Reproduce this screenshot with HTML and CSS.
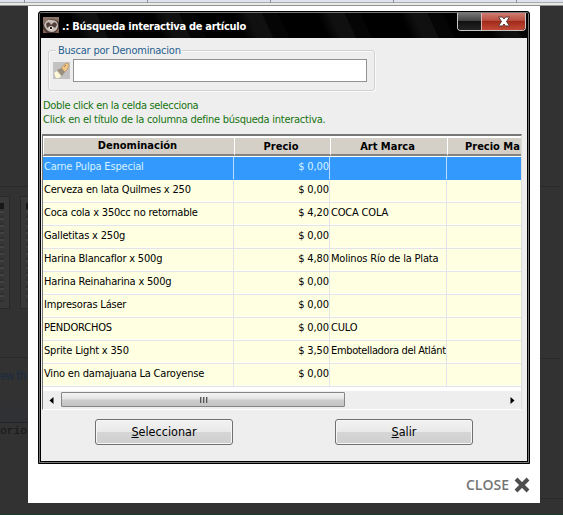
FILE: index.html
```html
<!DOCTYPE html>
<html lang="es">
<head>
<meta charset="utf-8">
<title>Búsqueda interactiva de artículo</title>
<link rel="stylesheet" href="styles.css">
</head>
<body>
<div class="strip"><i></i><i></i><i></i><i></i><i></i></div>
<div class="stage">
  <div class="behind">
    <div class="gap-top"></div>
    <div class="thumbs"><div class="thumb"><i></i></div><div class="thumb second"><i></i></div></div>
    <div class="gap-mid"></div>
    <div class="link">ew th</div>
    <div class="mono">orio</div>
  </div>
  <main class="lightbox">
    <section class="window">
      <header class="titlebar">
        <svg class="ferret" width="16" height="16" viewBox="0 0 16 16">
          <rect width="16" height="16" fill="#493a36"/>
          <path d="M0 0h16v5l-3-2-5-1-5 2-3 4z" fill="#8b7467"/>
          <path d="M1 8Q3 2 9 3q6 0 6 6-1 6-7 6-5-1-7-7z" fill="#c9bdb5"/>
          <path d="M3 7q2-3 4-1l1 2 2-2q3-2 4 2l-2 3-3-2H7l-3 2z" fill="#51403a"/>
          <path d="M6 10h4l-1 3H7z" fill="#f4eeea"/>
          <path d="M7 10h2v2H7z" fill="#251b19"/>
          <path d="M0 12l4 4H0zM16 11l-4 5h4z" fill="#81614f"/>
        </svg>
        <h1>.: Búsqueda interactiva de artículo</h1>
        <div class="controls">
          <span class="blank"></span>
          <span class="x"><svg width="14" height="11" viewBox="0 0 14 11"><path d="M1.500 1h4L7 3l1.500-2h4L9.500 5.500l3 4.500h-4L7 8l-1.500 2h-4l3-4.500z" fill="#fff" stroke="#5c3834"/></svg></span>
        </div>
      </header>
      <div class="body">
        <div class="search">
          <span class="legend">Buscar por Denominacion</span>
          <svg class="torch" width="17" height="17" viewBox="0 0 17 17">
            <rect width="17" height="17" fill="#c3c1c2"/>
            <path d="M8 6l4-4 3-1 1 3-2 4-4 3z" fill="#f2c888" stroke="#aa8553" stroke-width=".6"/>
            <path d="M4 8l5-2 3 4-3 4z" fill="#9c8e7d"/>
            <path d="M1 11l3-2 4 5-2 2H3z" fill="#fff8d5"/>
            <path d="M11 5l2-2" stroke="#8e704c"/>
          </svg>
          <input class="field" type="text" aria-label="Buscar">
        </div>
        <p class="hint"><span class="hint1">Doble click en la celda selecciona</span><br>Click en el título de la columna define búsqueda interactiva.</p>
        <div class="grid">
          <div class="row head"><b class="first">Denominación</b><b>Precio</b><b>Art Marca</b><b class="cut">Precio Ma</b></div>
          <div class="row selected"><span>Carne Pulpa Especial</span><span>$ 0,00</span><span></span><span></span></div>
          <div class="row"><span>Cerveza en lata Quilmes x 250</span><span>$ 0,00</span><span></span><span></span></div>
          <div class="row"><span>Coca cola x 350cc no retornable</span><span>$ 4,20</span><span>COCA COLA</span><span></span></div>
          <div class="row"><span>Galletitas x 250g</span><span>$ 0,00</span><span></span><span></span></div>
          <div class="row"><span>Harina Blancaflor x 500g</span><span>$ 4,80</span><span>Molinos Río de la Plata</span><span></span></div>
          <div class="row"><span>Harina Reinaharina x 500g</span><span>$ 0,00</span><span></span><span></span></div>
          <div class="row"><span>Impresoras Láser</span><span>$ 0,00</span><span></span><span></span></div>
          <div class="row"><span>PENDORCHOS</span><span>$ 0,00</span><span>CULO</span><span></span></div>
          <div class="row"><span>Sprite Light x 350</span><span>$ 3,50</span><span class="full">Embotelladora del Atlánt</span><span></span></div>
          <div class="row"><span>Vino en damajuana La Caroyense</span><span>$ 0,00</span><span></span><span></span></div>
          <div class="scroll">
            <svg width="18" height="17"><path d="M10.500 5v7L6.500 8.500z"/></svg>
            <div class="thumbbar"><i></i><i></i><i></i></div>
            <svg class="right" width="18" height="17"><path d="M7.500 5v7l4-3.500z"/></svg>
          </div>
        </div>
        <div class="actions">
          <button><u>S</u>eleccionar</button>
          <button><u>S</u>alir</button>
        </div>
      </div>
    </section>
    <footer class="close"><span>CLOSE</span><svg width="16" height="16" viewBox="0 0 16 16"><path d="M2 2l12 12M14 2L2 14" stroke="#4e4e4e" stroke-width="4"/></svg></footer>
  </main>
  <div class="behind after"><div class="a"></div><div class="b"></div><div class="c"></div></div>
</div>
<div class="bottom"></div>
</body>
</html>
```

FILE: styles.css
```css
* { box-sizing: border-box; }
body {
  margin: 0;
  width: 563px;
  height: 515px;
  overflow: hidden;
  background: #333;
  color: #000;
  font: 11px/14px "DejaVu Sans Condensed", "DejaVu Sans", sans-serif;
  letter-spacing: -.19px;
  white-space: nowrap;
}
.strip {
  display: flex;
  height: 6px;
  background: #dfe1ef;
  border-bottom: 1px solid #929292;
  box-shadow: inset 0 -2px #e9e9e6, inset 0 -3px #a9aaae;
}
.strip i { width: 123px; height: 3px; border-right: 1px solid #8f9098; }
.strip i:first-child { width: 25px; }
.stage { display: grid; grid-template-columns: 28px 512px 23px; height: 497px; }
.behind { overflow: hidden; background: #323232; }
.gap-top { height: 181px; border-bottom: 1px solid #292929; }
.thumbs { display: flex; height: 122px; padding-top: 9px; }
.thumb { width: 10px; height: 113px; padding: 6px 5px 6px 0; border: 1px solid #292929; border-left: 0; background: #383838; }
.thumb.second { width: 8px; margin-left: 10px; padding: 6px 0 6px 5px; border-left: 1px solid #292929; border-right: 0; }
.thumb i { display: block; height: 100%; background: repeating-linear-gradient(#303030 0 2px, #454141 2px 4px, #363636 4px 7px); border-top: 6px solid #171717; }
.gap-mid { height: 49px; border-bottom: 1px solid #292929; }
.link { height: 65px; padding-top: 10px; border-bottom: 1px solid #242429; color: #1c2c40; font-size: 11.500px; line-height: 17px; letter-spacing: -.6px; background: linear-gradient(#323232 55%, #303136); }
.mono { padding-top: 1px; font: 11.500px/14px "Liberation Mono", monospace; color: #161616; }
.after .a { height: 181px; margin-right: 3px; border-bottom: 1px solid #292929; }
.after .b { height: 172px; margin-right: 3px; border-bottom: 1px solid #292929; }
.after .c { height: 140px; border-bottom: 1px solid #2a2a2a; }
.bottom { height: 12px; background: #323232; border-bottom: 1px solid #1d3b2d; }
.lightbox { background: #fff; padding: 5px 10px 0; }
.window {
  width: 492px;
  height: 453px;
  border: 1px solid #000;
  border-radius: 3px 3px 0 0;
  background: #000;
  box-shadow: inset 0 0 0 1px #777;
  padding: 1px 2px 2px;
}
.titlebar {
  display: flex;
  align-items: flex-start;
  height: 25px;
  padding: 4px 1px 0 2px;
  background: repeating-linear-gradient(65deg, #000 0 35px, #101010 47px 60px, #050505 61px 75px);
}
.titlebar h1 { margin: 3px 0 0 3px; color: #fff; font: bold 11px/14px "DejaVu Sans Condensed", "DejaVu Sans", sans-serif; letter-spacing: -.28px; }
.controls { display: flex; width: 69px; height: 18px; margin: -4px 0 0 auto; border: 1px solid #c6c6c6; border-top: 0; border-radius: 0 0 4px 4px; overflow: hidden; }
.blank { width: 23px; background: linear-gradient(#777, #444 45%, #111 50%, #242424); }
.x { display: flex; flex: 1; align-items: center; justify-content: center; border-left: 1px solid #ddb6b0; background: linear-gradient(#d17c70, #bb5044 43%, #a12b1b 50%, #c34a37); }
.body { height: 423px; background: #eee; padding: 12px 0 0 1px; }
.search {
  position: relative;
  display: flex;
  width: 327px;
  height: 41px;
  margin-left: 6px;
  padding: 8px 7px 0 4px;
  border: 1px solid #d2d2d2;
  border-radius: 3px;
  box-shadow: inset 1px 1px #fafafa, 1px 1px #fafafa;
}
.legend { position: absolute; left: 7px; top: -7px; padding: 0 1px 0 2px; background: #eee; color: #26608f; letter-spacing: -.22px; }
.torch { margin-top: 3px; }
.field { width: 295px; height: 23px; margin-left: 3px; padding: 0; border: 1px solid #929292; background: #fff; }
.hint { margin: 8px 0 0 1px; color: #16730f; letter-spacing: -.26px; }
.hint1 { letter-spacing: -.33px; }
.grid { width: 480px; height: 276px; margin-top: 7px; border: 1px solid #777; border-top-width: 2px; border-right-color: #ddd; border-bottom-color: #fff; background: #fff; overflow: hidden; }
.row { display: grid; grid-template-columns: 191px 96px 117px 74px; height: 23px; background: #ffffe1; }
.row > span { overflow: hidden; height: 23px; padding: 3px 0 0 1px; border-right: 1px solid #e3e3ea; border-bottom: 1px solid #e3e3ea; box-shadow: inset 0 -1px #fffff3; }
.row > span:nth-child(2) { text-align: right; padding-right: 0; letter-spacing: -.1px; }
.row > span:last-child { border-right: 0; }
.row > .full { letter-spacing: -.35px; }
.selected > span { background: #3399fd; color: #d5f2ff; box-shadow: none; border-right-color: #b9dcff; border-bottom-color: #3399fd; }
.head { height: 21px; border-top: 1px solid #fff; border-bottom: 1px solid #fff; background: #d4d0c8; }
.head b { overflow: hidden; height: 19px; padding: 2px 3px 0 0; text-align: center; letter-spacing: 0; border-left: 1px solid #fff; border-top: 1px solid #fff; border-bottom: 2px solid #85837f; }
.head .first { padding-top: 1px; }
.head .cut { text-align: left; padding: 2px 0 0 17px; }
.scroll { display: flex; height: 18px; margin-top: 4px; padding-top: 1px; background: #eee; }
.thumbbar { display: flex; align-items: center; justify-content: center; gap: 2px; width: 284px; height: 15px; border: 1px solid #858585; border-radius: 1px; background: linear-gradient(#f4f4f4, #e2e2e2 48%, #cecece 52%, #c3c3c3); }
.thumbbar i { width: 1px; height: 6px; background: #555; box-shadow: 1px 0 #aaa; }
.scroll .right { margin-left: auto; }
.actions { display: flex; gap: 102px; padding: 9px 0 0 53px; }
button { width: 138px; height: 26px; padding: 0; border: 1px solid #707070; border-radius: 3px; background: linear-gradient(#f2f2f2, #e9e9e9 48%, #d6d6d6 52%, #cecece); box-shadow: inset 0 0 0 1px #f6f6f6; color: #000; font: 12.500px/16px "DejaVu Sans Condensed", "DejaVu Sans", sans-serif; }
.close { display: flex; justify-content: flex-end; align-items: center; gap: 5px; height: 16px; margin-top: 13px; }
.close span { color: #757575; font: 600 14px/16px "Open Sans", sans-serif; letter-spacing: 0; }
```
